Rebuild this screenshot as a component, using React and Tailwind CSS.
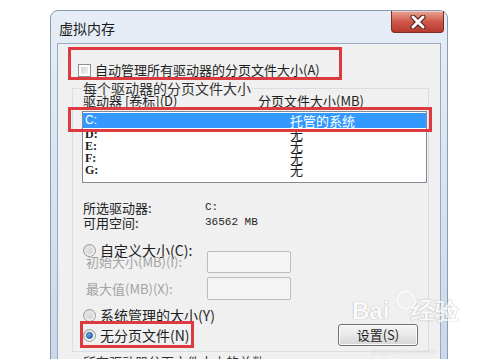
import React from "react";

function Radio({ checked }) {
  return (
    <span className="flex h-[13px] w-[13px] shrink-0 items-center justify-center rounded-full border border-[#9a9a9a] bg-linear-to-br from-[#d6d6d6] to-[#fbfbfb]">
      {checked ? (
        <span className="h-[7px] w-[7px] rounded-full bg-linear-to-br from-[#7fc0f0] to-[#1b5fb8] border border-[#1d4f8e]" />
      ) : (
        <span className="h-[7px] w-[7px] rounded-full bg-linear-to-br from-[#e8e8e8] to-[#d0d0d0]" />
      )}
    </span>
  );
}

function CloseBtn() {
  return (
    <div className="mr-[3px] flex h-[22px] w-[53px] items-center justify-center rounded-b-[4px] border border-t-0 border-[#7a2c25] bg-linear-to-b from-[#e8a496] via-[#d0584a] to-[#b53a2e] shadow-[inset_0_1px_0_rgba(255,255,255,0.5)]">
      <svg width="16" height="14" viewBox="0 0 16 14">
        <path d="M3 2 L13 12 M13 2 L3 12" stroke="#4a1d18" strokeWidth="5" strokeLinecap="round" />
        <path d="M3 2 L13 12 M13 2 L3 12" stroke="#ffffff" strokeWidth="3" strokeLinecap="round" />
      </svg>
    </div>
  );
}

export default function App() {
  const rows = [
    ["D:", "无"],
    ["E:", "无"],
    ["F:", "无"],
    ["G:", "无"],
  ];
  return (
    <div className="relative h-[359px] w-[479px] overflow-hidden bg-white font-['Noto_Sans_CJK_SC',sans-serif] text-[13px] text-[#1e1e1e]">
      <div className="ml-[50px] mt-[10px] flex h-[370px] w-[398px] flex-col rounded-t-[8px] border border-[#8a9bb0] bg-linear-to-b from-[#e6edf6] via-[#d8e3f0] to-[#c7d7ea]">
        <div className="flex h-[32px] items-start justify-between">
          <span className="ml-[8px] mt-[9px] text-[14px] leading-[16px] text-[#1a1a1a]">虚拟内存</span>
          <CloseBtn />
        </div>
        <div className="mx-[6px] flex flex-1 flex-col border border-[#9aabc1] bg-[#f0f0f0]">
          <div className="mt-[16px] flex h-[20px] items-center gap-[4px] pl-[20px]">
            <span className="h-[13px] w-[13px] border border-[#8e8f8f] bg-white p-[2px]">
              <span className="block h-full w-full bg-linear-to-br from-[#d4d4d4] to-[#f4f4f4]" />
            </span>
            <span className="text-[13px] leading-[16px]">自动管理所有驱动器的分页文件大小(A)</span>
          </div>

          <fieldset className="ml-[14px] mt-[2px] w-[357px] border border-[#d5dfe5] pb-[5px] pl-[9px] pr-0">
            <legend className="px-[1px] text-[14px] leading-[12px] text-[#333]">每个驱动器的分页文件大小</legend>
            <div className="flex h-[14px] items-center pl-[1px] text-[13px] leading-[14px]">
              <span className="w-[175px]">驱动器 [卷标](D)</span>
              <span>分页文件大小(MB)</span>
            </div>

            <div className="mt-[3px] h-[72px] w-[345px] border border-[#828790] bg-white py-[1px]">
              <div className="flex h-[15px] items-center bg-[#3399ff] text-white">
                <span className="w-[207px] pl-[2px] font-['Liberation_Sans',sans-serif] text-[12px] leading-[15px]">C:</span>
                <span className="text-[13px] leading-[15px]">托管的系统</span>
              </div>
              {rows.map(([d, v]) => (
                <div key={d} className="flex h-[12px] items-center">
                  <span className="w-[207px] pl-[2px] font-['Liberation_Serif',serif] text-[12px] font-bold leading-[12px]">{d}</span>
                  <span className="text-[13px] leading-[12px]">{v}</span>
                </div>
              ))}
            </div>

            <div className="mt-[17px] flex h-[15px] items-center pl-[1px]">
              <span className="w-[122px] text-[13px] leading-[15px]">所选驱动器:</span>
              <span className="font-['Liberation_Mono',monospace] text-[11px] leading-[15px]">C:</span>
            </div>
            <div className="flex h-[15px] items-center pl-[1px]">
              <span className="w-[122px] text-[13px] leading-[15px]">可用空间:</span>
              <span className="font-['Liberation_Mono',monospace] text-[11px] leading-[15px]">36562 MB</span>
            </div>

            <div className="mt-[12px] flex h-[16px] items-center gap-[4px] pl-[1px]">
              <Radio />
              <span className="text-[14px] leading-[16px]">自定义大小(C):</span>
            </div>
            <div className="mt-[-7px] flex h-[22px] items-center">
              <span className="w-[125px] pl-[4px] text-[13px] leading-[16px] text-[#a3a3a3]">初始大小(MB)(I):</span>
              <span className="h-[22px] w-[84px] rounded-[2px] border border-[#bcbcbc] bg-[#f5f5f5]" />
            </div>
            <div className="mt-[4px] flex h-[23px] items-center">
              <span className="w-[125px] pl-[4px] text-[13px] leading-[16px] text-[#a3a3a3]">最大值(MB)(X):</span>
              <span className="h-[23px] w-[84px] rounded-[2px] border border-[#bcbcbc] bg-[#f5f5f5]" />
            </div>

            <div className="mt-[7px] flex h-[16px] items-center gap-[4px] pl-[1px]">
              <Radio />
              <span className="text-[14px] leading-[16px]">系统管理的大小(Y)</span>
            </div>
            <div className="mt-[1px] flex h-[22px] w-[345px] items-center gap-[4px] pl-[1px]">
              <Radio checked />
              <span className="text-[14px] leading-[16px]">无分页文件(N)</span>
              <button className="ml-auto mr-[9px] flex h-[22px] w-[80px] items-center justify-center rounded-[3px] border border-[#707070] bg-linear-to-b from-[#f4f4f4] via-[#e8e8e8] to-[#d6d6d6] text-[13px] leading-[16px] text-[#1e1e1e] shadow-[inset_0_0_0_1px_#fcfcfc]">
                设置(S)
              </button>
            </div>
          </fieldset>
          <div className="ml-[25px] mt-[3px] text-[13px] leading-[14px] text-[#333]">所有驱动器分页文件大小的总数</div>
        </div>
      </div>

      {/* annotation boxes */}
      <div className="absolute left-[68px] top-[47px] h-[33px] w-[274px] border-[3px] border-[#dc3a3f]" />
      <div className="absolute left-[68px] top-[107px] h-[25px] w-[364px] border-[3px] border-[#dc3a3f]" />
      <div className="absolute left-[80px] top-[321px] h-[27px] w-[114px] border-[3px] border-[#dc3a3f]" />

      {/* watermark */}
      <div className="pointer-events-none absolute left-[352px] top-[298px] font-['Liberation_Sans',sans-serif] text-[24px] font-bold leading-[26px] text-white opacity-70 [text-shadow:0_0_1px_#9a9a9a,0_0_1px_#9a9a9a]">
        Bai<span className="ml-[22px]">经验</span>
      </div>
      <div className="pointer-events-none absolute left-[396px] top-[290px] h-[20px] w-[20px] rounded-full border-[2px] border-white opacity-70 shadow-[0_0_1px_#9a9a9a]" />
      <div className="pointer-events-none absolute left-[372px] top-[347px] font-['Liberation_Sans',sans-serif] text-[8px] leading-[9px] text-white opacity-60 [text-shadow:0_0_1px_#9a9a9a]">
        jingyan.baidu.com
      </div>
    </div>
  );
}
